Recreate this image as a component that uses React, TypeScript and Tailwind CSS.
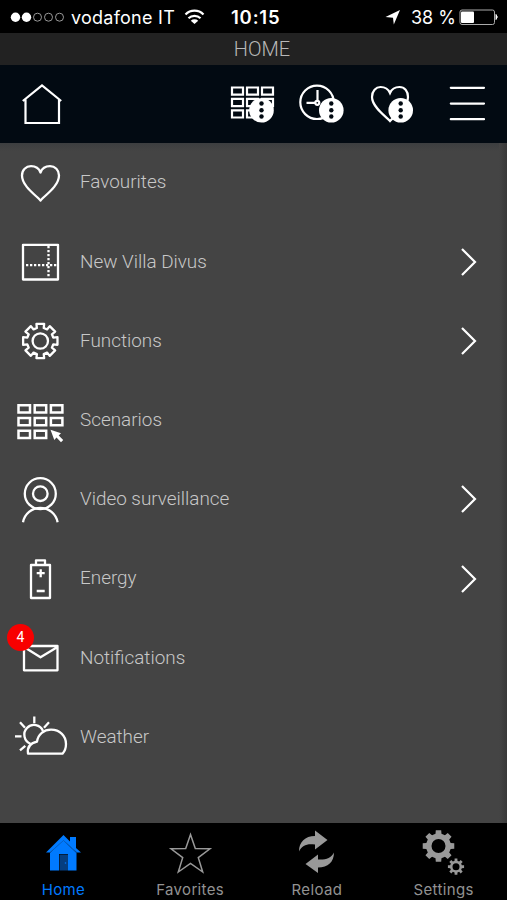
import React from 'react';

// outline of a cog with flat teeth
const gearPath = (cx: number, cy: number, outer: number, inner: number, tip: number, root: number) => {
  const points: string[] = [];
  for (let i = 0; i < 8; i++) {
    const mid = (i * Math.PI) / 4;
    [
      [inner, -root],
      [outer, -tip],
      [outer, tip],
      [inner, root],
    ].forEach(([r, a]) => {
      points.push(`${(cx + r * Math.cos(mid + a)).toFixed(2)} ${(cy + r * Math.sin(mid + a)).toFixed(2)}`);
    });
  }
  return `M${points.join('L')}Z`;
};

const RowIcon: React.FC<{ children: React.ReactNode }> = ({ children }) => (
  <svg className="w-20 h-[79px] shrink-0" viewBox="0 0 80 79" fill="none" stroke="#fff" strokeWidth="2.300" strokeLinejoin="round">
    {children}
  </svg>
);

const items = [
  {
    label: 'Favourites',
    arrow: false,
    icon: <path d="M40.500 57.500C37 53 22 43.500 22 32.500C22 27 26 23.200 31 23.200C36 23.200 39 25.500 40.500 29.500C42 25.500 45.500 23.200 50 23.200C55 23.200 59 27 59 32.500C59 43.500 44 53 40.500 57.500Z" />,
  },
  {
    label: 'New Villa Divus',
    arrow: true,
    icon: (
      <>
        <rect x="23" y="22.800" width="35" height="34.700" />
        <path d="M48.500 24V56M26 43.200H57" strokeDasharray="2.300 1.700" />
      </>
    ),
  },
  {
    label: 'Functions',
    arrow: true,
    icon: (
      <>
        <path d={gearPath(40.3, 40, 17.6, 13.4, 0.22, 0.26)} />
        <circle cx="40.300" cy="40" r="7.700" />
      </>
    ),
  },
  {
    label: 'Scenarios',
    arrow: false,
    icon: (
      <>
        <path
          strokeWidth="2.500"
          strokeLinejoin="miter"
          d="M18.500 24.200h11.500v7.300h-11.500zM34.700 24.200h11.500v7.300h-11.500zM50.900 24.200h11.500v7.300h-11.500zM18.500 37h11.500v7.300h-11.500zM34.700 37h11.500v7.300h-11.500zM50.900 37h11.500v7.300h-11.500zM18.500 49.800h11.500v7.300h-11.500zM34.700 49.800h11.500v7.300h-11.500z"
        />
        <path d="M50.500 48.700L61 52.200L58.700 54.500L63.200 59L61 61.300L56.500 56.500L54.300 59Z" fill="#fff" stroke="none" />
      </>
    ),
  },
  {
    label: 'Video surveillance',
    arrow: true,
    icon: (
      <>
        <circle cx="40.300" cy="33.700" r="15.500" />
        <circle cx="40.300" cy="33.700" r="7.300" />
        <path d="M23 62.200A17.600 17.600 0 0 1 57.600 62.200" />
      </>
    ),
  },
  {
    label: 'Energy',
    arrow: true,
    icon: (
      <>
        <rect x="31" y="26" width="19" height="33" />
        <path d="M36 26V21.300H45V26M36.700 34.200H44.700M40.700 30.200V38.200M36.700 52H44.700" />
      </>
    ),
  },
  {
    label: 'Notifications',
    arrow: false,
    badge: '4',
    icon: (
      <path d="M24 28H57.500V52.300H24ZM24 29L40.500 39.300L57.500 29" />
    ),
  },
  {
    label: 'Weather',
    arrow: false,
    icon: (
      <>
        <path d="M34.300 19.500V26.300M15 39.300H21.500M20 25.300L25 30.800M49 25.300L44 30.800M20 53.300L25.300 48.800" />
        <path d="M30.500 46.700A9.700 9.700 0 1 1 43 34" />
        <path d="M28 56.700C27 50 31 46 37 44.700C38 37 44 32.700 51 32.700C60 32.700 66 39 66 47C66 51 65 54 62.500 56.700Z" />
      </>
    ),
  },
];

const MoreDots: React.FC<{ cx: number }> = ({ cx }) => (
  <g stroke="none">
    <circle cx={cx} cy="45.200" r="12.300" fill="#fff" />
    <circle cx={cx} cy="38.500" r="2.200" fill="#020a12" />
    <circle cx={cx} cy="45.200" r="2.200" fill="#020a12" />
    <circle cx={cx} cy="51.500" r="2.200" fill="#020a12" />
  </g>
);

const StatusBar = () => (
  <div className="h-[33px] bg-black text-white flex items-center font-[Inter,sans-serif]">
    <svg className="w-[70px] h-[33px] shrink-0" viewBox="0 0 70 33" fill="none" stroke="#999">
      <circle cx="15.500" cy="17.200" r="4.700" fill="#fff" stroke="none" />
      <circle cx="26.500" cy="17.200" r="4.700" fill="#fff" stroke="none" />
      <circle cx="37.500" cy="17.200" r="4" />
      <circle cx="48.500" cy="17.200" r="4" />
      <circle cx="59.500" cy="17.200" r="4" />
    </svg>
    <div className="w-[114px] shrink-0 pl-px pt-0.5 text-[18px] tracking-[0.25px] whitespace-nowrap">vodafone IT</div>
    <svg className="w-[22px] h-[33px] shrink-0" viewBox="184 0 22 33" fill="none" stroke="#fff" strokeWidth="2.200">
      <path d="M185.500 14.500A12.500 12.500 0 0 1 203.500 14.500M188.500 18.300A8.500 8.500 0 0 1 200.500 18.300" />
      <path d="M190.800 20.700A5.500 5.500 0 0 1 198.200 20.700L194.500 24Z" fill="#fff" stroke="none" />
    </svg>
    <div className="w-[178px] shrink-0 pl-[25px] pt-0.5 text-[18.5px] tracking-[0.8px] font-semibold">10:15</div>
    <svg className="w-[22px] h-[33px] shrink-0" viewBox="384 0 22 33">
      <path d="M400 10L393.800 24.500L393 17.800L385.500 17Z" fill="#fff" />
    </svg>
    <div className="w-[52px] shrink-0 pl-[5px] pt-0.5 text-[18px] whitespace-nowrap">38 %</div>
    <svg className="w-10 h-[33px] shrink-0" viewBox="458 0 40 33" fill="none">
      <rect x="460" y="10" width="34.500" height="14.500" rx="2" stroke="#aaa" />
      <rect x="461" y="11.500" width="13" height="11.500" rx="1" fill="#fff" />
      <path d="M496 14.500Q498.500 17 496 19.500Z" fill="#fff" stroke="#fff" />
    </svg>
  </div>
);

const Toolbar = () => (
  <div className="h-[78px] bg-[#020a12] flex justify-between">
    <svg className="w-20 h-[78px]" viewBox="0 0 80 78" fill="none" stroke="#fff" strokeWidth="2.200">
      <path d="M22.800 36L42 20.500L61.200 36M25.500 34.500V58H59V34.500" />
    </svg>
    <svg className="w-[287px] h-[78px]" viewBox="220 0 287 78" fill="none" stroke="#fff" strokeWidth="2.200">
      <path d="M232 22.500h11v7.200h-11zM247 22.500h11v7.200h-11zM262 22.500h11v7.200h-11zM232 33.900h11v7.200h-11zM247 33.900h11v7.200h-11zM262 33.900h11v7.200h-11zM232 45.300h11v7.200h-11zM247 45.300h11v7.200h-11z" />
      <MoreDots cx={261.5} />
      <circle cx="317" cy="37.300" r="16.700" />
      <path d="M317.500 25V35M306.500 37.800H315" />
      <circle cx="317.300" cy="37.800" r="2" />
      <MoreDots cx={331.3} />
      <path d="M390 56C386 51.500 372 42 372 32C372 26 376 22 380.500 22C385 22 388.500 24.500 390 28C391.500 24.500 395 22 399.500 22C404.500 22 408 26 408 32C408 42 394 51.500 390 56Z" />
      <MoreDots cx={400.7} />
      <path d="M450.800 22.800H484M450.800 38.600H484M450.800 54.200H484" strokeLinecap="round" />
    </svg>
  </div>
);

const tabs = [
  {
    label: 'Home',
    active: true,
    icon: (
      <>
        <path d="M50 30V47.500H59V31H68V47.500H76.500V30L63 17Z" fill="#007aff" />
        <path d="M70 14H76V25L81 29.500H77L63.500 17.500L50 29.500H46L63.500 12L70 18.500Z" fill="#007aff" />
        <path d="M50 29.500L63.500 17.500L77 29.500" fill="none" stroke="#0561c6" />
        <path d="M59.500 31.500H68V47.500H59.500Z" fill="#053e80" />
        <circle cx="65.500" cy="40" r=".8" fill="#007aff" />
      </>
    ),
  },
  {
    label: 'Favorites',
    active: false,
    icon: (
      <path
        d="M63.500 11.500L68.300 25.600L83 25.800L71.300 34.600L75.700 49L63.500 40.500L51.300 49L55.700 34.600L44 25.800L58.700 25.600Z"
        fill="none"
        stroke="#999"
        strokeWidth="1.500"
      />
    ),
  },
  {
    label: 'Reload',
    active: false,
    icon: (
      <>
        <path d="M46 28.500C46 19 52 13 62 13V7.500L74.500 17L62 26.500V21.500C54 20.500 49 22 46 28.500Z" fill="#999" />
        <path d="M81 29.500C81 39 75 44.500 65 44.500V50L52.500 41L65 31.500V36.500C73 37 78 35 81 29.500Z" fill="#999" />
      </>
    ),
  },
  {
    label: 'Settings',
    active: false,
    icon: (
      <>
        <path fillRule="evenodd" d={`${gearPath(58.5, 23, 16, 12.5, 0.17, 0.24)}M51.500 23a7 7 0 1 0 14 0a7 7 0 1 0 -14 0Z`} fill="#999" />
        <path fillRule="evenodd" d={`${gearPath(76, 43.7, 8.2, 6, 0.17, 0.24)}M72.500 43.700a3.500 3.500 0 1 0 7 0a3.500 3.500 0 1 0 -7 0Z`} fill="#999" />
      </>
    ),
  },
];

const App: React.FC = () => {
  return (
    <div className="w-full h-[900px] flex flex-col overflow-hidden bg-[#444]">
      <StatusBar />
      <div className="h-8 bg-[#222] text-[#b8b8b8] flex items-center justify-center pl-[17px] text-[20px] font-light font-[Roboto,sans-serif]">
        HOME
      </div>
      <Toolbar />

      <div className="flex-1 flex bg-linear-to-b from-[#3c3e40] to-[#444] to-[8px]">
        <div className="flex-1">
          {items.map((item) => (
            <div key={item.label} className="relative h-[79.2px] flex items-center">
              <RowIcon>{item.icon}</RowIcon>
              {item.badge && (
                <span className="absolute left-[7px] top-[6px] size-[27px] rounded-full bg-[#f80000] text-white text-[14px] flex items-center justify-center font-[Roboto,sans-serif]">
                  {item.badge}
                </span>
              )}
              <span className="flex-1 text-[#c8c8c8] text-[18.9px] font-light font-[Roboto,sans-serif]">{item.label}</span>
              {item.arrow && (
                <svg className="w-5 h-8 mr-[18px]" viewBox="0 0 20 32" fill="none" stroke="#fff" strokeWidth="2.200">
                  <path d="M1 3L14 16L1 29" />
                </svg>
              )}
            </div>
          ))}
        </div>
        <div className="w-2 bg-linear-to-r from-[#444] to-[#383838]"></div>
      </div>

      <div className="h-[77px] bg-black grid grid-cols-4">
        {tabs.map((tab) => (
          <div key={tab.label} className={`flex flex-col items-center ${tab.active ? 'text-[#007aff]' : 'text-[#929292]'}`}>
            <svg className="w-[127px] h-[55px]" viewBox="0 0 127 55">
              {tab.icon}
            </svg>
            <span className="pt-px text-[15px] leading-[22px] tracking-[0.35px] font-[Inter,sans-serif]">{tab.label}</span>
          </div>
        ))}
      </div>
    </div>
  );
};

export default App;
